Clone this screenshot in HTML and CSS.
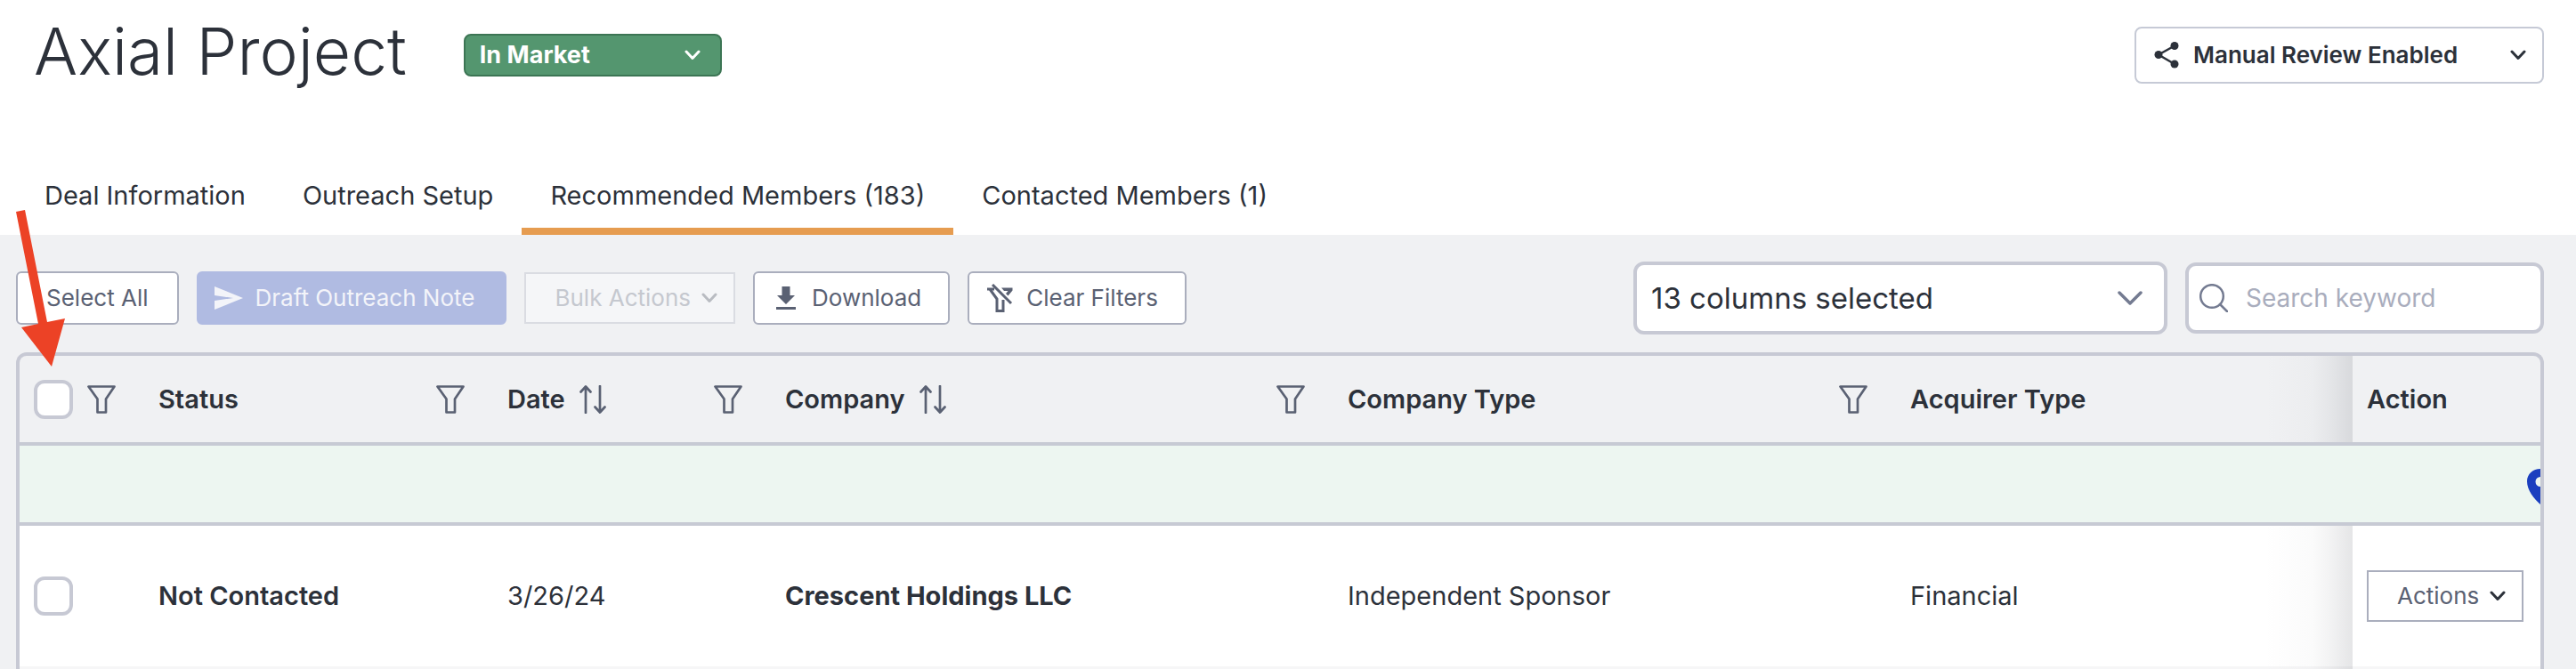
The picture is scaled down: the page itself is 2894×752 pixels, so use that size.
FILE: index.html
```html
<!DOCTYPE html>
<html lang="en">
<head>
	<meta charset="UTF-8" />
	<meta name="viewport" content="width=device-width, initial-scale=1.0" />
	<title>Axial Project</title>
	<link rel="stylesheet" href="styles.css">
</head>
<body>

	<!-- Shared icons -->
	<svg class="sprite" aria-hidden="true">
		<symbol id="icon-chevron" viewBox="0 0 18 12">
			<path d="M2 2l7 7.500l7-7.500" fill="none" stroke="currentColor" stroke-width="3" stroke-linecap="round" stroke-linejoin="round" />
		</symbol>
		<symbol id="icon-chevron-large" viewBox="0 0 28 16">
			<path d="M2 2l12 12l12-12" fill="none" stroke="currentColor" stroke-width="3.500" stroke-linecap="round" stroke-linejoin="round" />
		</symbol>
		<symbol id="icon-filter" viewBox="0 0 32 32">
			<path d="M1.500 1.500h29L21 15.500v15h-9.500v-15z" fill="none" stroke="currentColor" stroke-width="2.700" stroke-linejoin="round" />
		</symbol>
		<symbol id="icon-sort" viewBox="0 0 30 32">
			<path d="M7 31V2M1.500 7.500L7 1.500l5.500 6M23 1v29M17.500 24.500l5.500 6l5.500-6" fill="none" stroke="currentColor" stroke-width="2.700" stroke-linecap="round" stroke-linejoin="round" />
		</symbol>
	</svg>

	<div class="page">
		<header class="header">
			<h1 class="header__title">Axial Project</h1>
			<div class="dropdown dropdown--status">
				<select class="dropdown__select" aria-label="Project status">
					<option>In Market</option>
				</select>
				<svg class="dropdown__chevron" width="18" height="12"><use href="#icon-chevron" /></svg>
			</div>
			<div class="dropdown dropdown--review">
				<svg class="dropdown__icon" width="28" height="30" viewBox="0 0 28 30">
					<path d="M23 4.500L5 14.500l18 10.500" fill="none" stroke="currentColor" stroke-width="2.500" />
					<circle cx="23" cy="4.500" r="4.500" fill="currentColor" />
					<circle cx="5" cy="14.500" r="4.500" fill="currentColor" />
					<circle cx="23" cy="25" r="4.500" fill="currentColor" />
				</svg>
				<select class="dropdown__select" aria-label="Review mode">
					<option>Manual Review Enabled</option>
				</select>
				<svg class="dropdown__chevron" width="18" height="12"><use href="#icon-chevron" /></svg>
			</div>
		</header>

		<nav class="tabs">
			<a class="tabs__tab" href="#deal">Deal Information</a>
			<a class="tabs__tab" href="#outreach">Outreach Setup</a>
			<a class="tabs__tab tabs__tab--active" href="#recommended">Recommended Members (183)</a>
			<a class="tabs__tab" href="#contacted">Contacted Members (1)</a>
		</nav>

		<main class="content">
			<div class="toolbar">
				<button class="button">Select All</button>
				<button class="button button--primary" disabled>
					<svg width="32" height="26" viewBox="0 0 32 26"><path d="M0 0l32 13L0 26V16l21-3L0 10z" fill="currentColor" /></svg>
					Draft Outreach Note
				</button>
				<button class="button button--menu" disabled>
					Bulk Actions
					<svg width="18" height="12"><use href="#icon-chevron" /></svg>
				</button>
				<button class="button button--icon">
					<svg width="30" height="26" viewBox="-4 0 30 26"><path d="M6.500 0h9v10h5.500l-10 10L1 10h5.500zM0 23h22v3H0z" fill="currentColor" /></svg>
					Download
				</button>
				<button class="button button--icon">
					<svg width="30" height="32" viewBox="0 0 30 32">
						<path d="M0 6h8M3 6l8 11v13.500h7V18" fill="none" stroke="currentColor" stroke-width="3" />
						<path d="M6 1l21 21" fill="none" stroke="currentColor" stroke-width="3" />
						<path d="M16 4.500h12.500v3l-5 6l-2.500-2.500l2.500-3H19z" fill="currentColor" />
					</svg>
					Clear Filters
				</button>
				<div class="dropdown dropdown--columns">
					<select class="dropdown__select" aria-label="Columns">
						<option>13 columns selected</option>
					</select>
					<svg class="dropdown__chevron" width="28" height="16"><use href="#icon-chevron-large" /></svg>
				</div>
				<div class="search">
					<svg class="search__icon" width="32" height="32" viewBox="0 0 32 32">
						<path d="M23 23l8 8" fill="none" stroke="currentColor" stroke-width="2.500" stroke-linecap="round" />
						<circle cx="14" cy="14" r="12.800" fill="none" stroke="currentColor" stroke-width="2.500" />
					</svg>
					<input class="search__input" type="text" placeholder="Search keyword" aria-label="Search keyword" />
				</div>
			</div>

			<div class="members">
				<table class="members__table">
					<colgroup>
						<col class="members__col-check" />
						<col class="members__col-status" />
						<col class="members__col-date" />
						<col class="members__col-company" />
						<col class="members__col-company" />
						<col />
						<col class="members__col-action" />
					</colgroup>
					<thead>
						<tr>
							<th class="members__check">
								<div class="members__heading">
									<input class="checkbox" type="checkbox" aria-label="Select all members" />
									<svg class="members__filter" width="32" height="32"><use href="#icon-filter" /></svg>
								</div>
							</th>
							<th>
								<div class="members__heading">Status
									<svg class="members__filter" width="32" height="32"><use href="#icon-filter" /></svg>
								</div>
							</th>
							<th>
								<div class="members__heading">Date
									<svg class="members__sort" width="30" height="32"><use href="#icon-sort" /></svg>
									<svg class="members__filter" width="32" height="32"><use href="#icon-filter" /></svg>
								</div>
							</th>
							<th>
								<div class="members__heading">Company
									<svg class="members__sort" width="30" height="32"><use href="#icon-sort" /></svg>
									<svg class="members__filter" width="32" height="32"><use href="#icon-filter" /></svg>
								</div>
							</th>
							<th>
								<div class="members__heading">Company Type
									<svg class="members__filter" width="32" height="32"><use href="#icon-filter" /></svg>
								</div>
							</th>
							<th>Acquirer Type</th>
							<th class="members__action">Action</th>
						</tr>
					</thead>
					<tbody>
						<tr class="members__pinned">
							<td colspan="7">
								<div class="members__pin">
									<svg width="30" height="40" viewBox="0 0 30 40"><path fill-rule="evenodd" d="M15 0C6.500 0 0 6 0 14C0 24 8 34 15 40C22 34 30 24 30 14C30 6 23.500 0 15 0zM15 9a5.500 5.500 0 1 0 0 11a5.500 5.500 0 0 0 0-11z" fill="currentColor" /></svg>
								</div>
							</td>
						</tr>
						<tr class="members__row">
							<td class="members__check"><input class="checkbox" type="checkbox" aria-label="Select Crescent Holdings LLC" /></td>
							<td class="members__status">Not Contacted</td>
							<td>3/26/24</td>
							<td class="members__company">Crescent Holdings LLC</td>
							<td>Independent Sponsor</td>
							<td>Financial</td>
							<td class="members__action">
								<button class="button button--menu">
									Actions
									<svg width="18" height="12"><use href="#icon-chevron" /></svg>
								</button>
							</td>
						</tr>
						<tr class="members__row members__row--alt">
							<td colspan="6"></td>
							<td class="members__action"></td>
						</tr>
					</tbody>
				</table>
			</div>
		</main>

		<svg class="pointer" width="56" height="176" viewBox="0 0 56 176" aria-hidden="true">
			<path d="M0 2L10 0L35 126L55 122L40 176L6 132L25 128z" fill="#ec4226" />
		</svg>
	</div>

</body>
</html>
```
FILE: styles.css
```css
* {
	box-sizing: border-box;
}

body {
	margin: 0;
	font-family: Inter, "Liberation Sans", sans-serif;
	font-size: 29px;
	line-height: 36px;
	color: #2c313a;
	background-color: #ffffff;
}

svg {
	display: block;
	flex: none;
}

select,
button,
input {
	margin: 0;
	font: inherit;
	color: inherit;
}

.sprite {
	position: absolute;
	width: 0;
	height: 0;
}

.page {
	position: relative;
	display: flex;
	flex-direction: column;
	height: 100vh;
	overflow: hidden;
}

/* Header */

.header {
	display: flex;
	align-items: flex-start;
	padding: 30px 36px 0 38px;
}

.header__title {
	margin: 0;
	font-size: 73px;
	font-weight: 300;
	line-height: 56px;
}

/* Dropdowns */

.dropdown {
	position: relative;
}

.dropdown__select {
	display: block;
	width: 100%;
	height: 100%;
	padding: 0 60px 0 16px;
	border: 2px solid #c6cad6;
	border-radius: 8px;
	background-color: #ffffff;
	appearance: none;
}

.dropdown__icon {
	position: absolute;
	left: 22px;
	top: 0;
	bottom: 0;
	margin: auto 0;
}

.dropdown__chevron {
	position: absolute;
	right: 20px;
	top: 0;
	bottom: 0;
	margin: auto 0;
	pointer-events: none;
}

.dropdown--status {
	width: 290px;
	height: 48px;
	margin: 8px 0 0 64px;
	font-size: 27px;
	font-weight: 700;
	color: #ffffff;
}

.dropdown--status .dropdown__select {
	border-color: #3c7554;
	background-color: #54966f;
}

.dropdown--status .dropdown__chevron {
	right: 24px;
}

.dropdown--review {
	width: 460px;
	height: 64px;
	margin-left: auto;
	font-size: 26px;
	font-weight: 600;
}

.dropdown--review .dropdown__select {
	padding-left: 64px;
}

.dropdown--columns {
	width: 600px;
	height: 82px;
	margin-left: auto;
	font-size: 33px;
}

.dropdown--columns .dropdown__select {
	border: 4px solid #c7c9d4;
	border-radius: 12px;
}

.dropdown--columns .dropdown__chevron {
	right: 28px;
	color: #747b91;
}

/* Tabs */

.tabs {
	display: flex;
	padding: 108px 18px 0;
}

.tabs__tab {
	padding: 0 32px 18px;
	border-bottom: 8px solid transparent;
	color: inherit;
	text-decoration: none;
}

.tabs__tab--active {
	border-bottom-color: #e69c50;
}

/* Toolbar */

.content {
	display: flex;
	flex: 1;
	flex-direction: column;
	min-height: 0;
	padding: 30px 36px 0 18px;
	background-color: #f0f1f3;
}

.toolbar {
	display: flex;
	align-items: center;
	gap: 20px;
	padding-bottom: 20px;
}

.button {
	display: flex;
	align-items: center;
	height: 60px;
	padding: 0 32px;
	border: 2px solid #aaaebd;
	border-radius: 6px;
	font-size: 26px;
	white-space: nowrap;
	color: #5a6173;
	background-color: #ffffff;
}

.button--primary {
	gap: 14px;
	padding: 0 34px 0 18px;
	border-color: #b0bbe2;
	color: #f3f4f9;
	background-color: #b0bbe2;
}

.button--menu {
	gap: 12px;
	height: 58px;
	padding: 0 18px 0 32px;
	border-radius: 0;
}

.button--menu svg {
	color: #2c313a;
}

.button--menu:disabled {
	border-color: #dadce2;
	color: #c5c8cf;
	background-color: #f5f6f8;
}

.button--menu:disabled svg {
	color: #b9bcc2;
}

.button--icon {
	gap: 14px;
	padding: 0 30px 0 20px;
}

.search {
	position: relative;
	width: 403px;
	height: 80px;
	font-size: 28px;
}

.search__input {
	width: 100%;
	height: 100%;
	padding: 0 12px 0 64px;
	border: 4px solid #c7c9d4;
	border-radius: 12px;
	background-color: #ffffff;
}

.search__input::placeholder {
	color: #a9adbd;
	opacity: 1;
}

.search__icon {
	position: absolute;
	left: 16px;
	top: 0;
	bottom: 0;
	margin: auto 0;
	color: #747b91;
}

/* Members table */

.members {
	flex: 1;
	min-height: 0;
	overflow: hidden;
	border: 4px solid #c7c9d4;
	border-bottom: 0;
	border-radius: 12px 12px 0 0;
}

.members__table {
	width: 100%;
	table-layout: fixed;
	border-spacing: 0;
}

.members__col-check {
	width: 132px;
}

.members__col-status {
	width: 392px;
}

.members__col-date {
	width: 312px;
}

.members__col-company {
	width: 632px;
}

.members__col-action {
	width: 211px;
}

.members th,
.members td {
	padding: 0 24px;
	text-align: left;
}

.members th {
	height: 101px;
	border-bottom: 4px solid #c7cad4;
	font-weight: 600;
}

.members .members__check {
	padding: 0 24px 0 16px;
}

.members__heading {
	display: flex;
	align-items: center;
}

.members__filter {
	margin-left: auto;
	color: #5a6173;
}

.members__sort {
	margin-left: 16px;
	color: #5a6173;
}

.members .members__pinned td {
	height: 90px;
	padding: 0;
	border-bottom: 4px solid #c7cad4;
	background-color: #edf6f1;
}

.members__pin {
	display: flex;
	justify-content: flex-end;
	margin-right: -15px;
	padding-top: 6px;
	color: #1b3fbf;
}

.members__row td {
	height: 158px;
	background-color: #ffffff;
}

.members__row--alt td {
	background-color: #f6f6f7;
}

.members__status {
	font-weight: 600;
}

.members__company {
	font-weight: 700;
}

.members .members__action {
	position: relative;
	padding: 0 16px;
}

.members__action::before {
	content: "";
	position: absolute;
	top: 0;
	bottom: 0;
	right: 100%;
	width: 100px;
	background: linear-gradient(to right, rgba(40, 44, 56, 0), rgba(40, 44, 56, 0.02) 55%, rgba(40, 44, 56, 0.06) 75%, rgba(40, 44, 56, 0.12));
}

.checkbox {
	display: block;
	width: 44px;
	height: 44px;
	border: 4px solid #c7c9d4;
	border-radius: 12px;
	background-color: #ffffff;
	appearance: none;
}

.checkbox:checked {
	background-color: #5a6173;
}

/* Arrow that points at the select-all box */
.pointer {
	position: absolute;
	left: 18px;
	top: 236px;
}
```
